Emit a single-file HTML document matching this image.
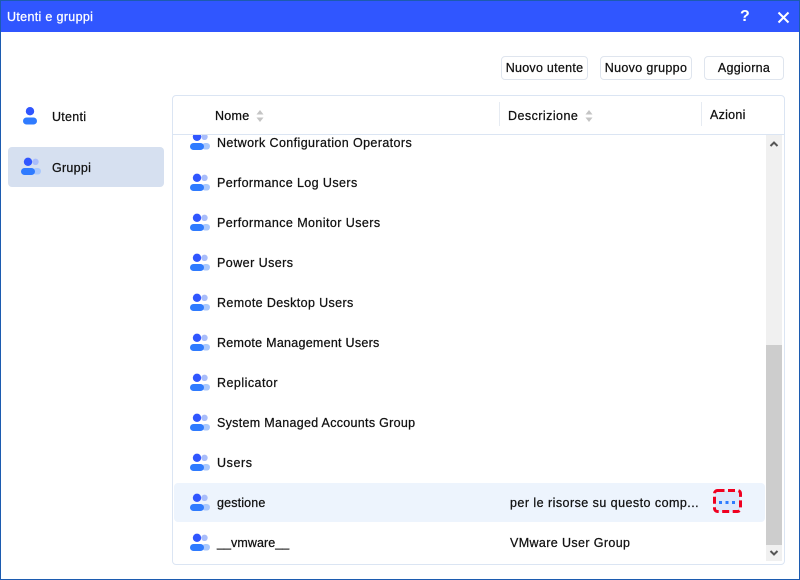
<!DOCTYPE html>
<html><head><meta charset="utf-8"><style>
html,body{margin:0;padding:0;background:#fff}
#w{position:relative;width:800px;height:580px;overflow:hidden;background:#fff;font-family:"Liberation Sans",sans-serif;font-size:12.5px;color:#111;letter-spacing:.27px;-webkit-text-stroke:.25px currentColor}
#w div{position:absolute;box-sizing:border-box;white-space:nowrap}
.t{line-height:16px}
.btn{top:56px;height:24px;border:1px solid #dfe5ee;border-radius:4px;text-align:center;line-height:23px;background:#fff;-webkit-text-stroke:.25px #111}
svg{position:absolute;left:0;top:0;overflow:visible}
</style></head><body><div id="w">
<svg width="0" height="0" style="position:absolute"><defs><g id="g"><circle cx="14.500" cy="3.800" r="3.200" fill="#a9bdfb"/><rect x="12" y="10" width="8" height="6.500" rx="3.200" fill="#a9c8fd"/><circle cx="7" cy="3.800" r="4.200" fill="#3056ff"/><rect x="0" y="10" width="14" height="7" rx="3.500" fill="#2f7bff"/></g></defs></svg>
<div style="left:0;top:0;width:800px;height:580px;border:1px solid #1c5bb0;border-top:none"></div>
<div style="left:0;top:0;width:800px;height:32px;background:#3056ff;border:1px solid #1c5bb0;border-width:1px 1px 0 1px"></div>
<div class="t" style="left:7px;top:9px;color:#fff;letter-spacing:.33px">Utenti e gruppi</div>
<div style="left:740px;top:7px;color:#fff;font-size:16px;font-weight:bold;line-height:20px;letter-spacing:0;-webkit-text-stroke:0">?</div>
<svg style="left:777px;top:11px" width="13" height="13"><path d="M1.500 1.500L11.500 11.500M11.500 1.500L1.500 11.500" stroke="#fff" stroke-width="2" fill="none"/></svg>

<div class="btn" style="left:501px;width:87px">Nuovo utente</div>
<div class="btn" style="left:600px;width:92px;letter-spacing:.33px">Nuovo gruppo</div>
<div class="btn" style="left:704px;width:80px">Aggiorna</div>

<div style="left:8px;top:147px;width:156px;height:40px;background:#d6e0f0;border-radius:4px"></div>
<svg style="left:23px;top:107px" width="15" height="18"><circle cx="7" cy="4.200" r="4.200" fill="#3056ff"/><rect x="0" y="10.500" width="14" height="7" rx="3.500" fill="#2f7bff"/></svg>
<div class="t" style="left:52px;top:109px">Utenti</div>
<svg style="left:21px;top:158px" width="20" height="18"><use href="#g"/></svg>
<div class="t" style="left:52px;top:160px">Gruppi</div>

<div style="left:172px;top:95px;width:613px;height:470px;border:1px solid #dbe5f3;border-radius:4px"></div>
<div style="left:173px;top:134px;width:611px;height:1px;background:#dbe5f3"></div>
<div class="t" style="left:215px;top:108px">Nome</div>
<svg style="left:256px;top:110px" width="8" height="12"><path d="M4 0L7.500 4.500H.5Z" fill="#c4c4c4"/><path d="M4 12L7.500 7.500H.5Z" fill="#c4c4c4"/></svg>
<div style="left:499px;top:102px;width:1px;height:24px;background:#e6ebf2"></div>
<div class="t" style="left:508px;top:108px;letter-spacing:.45px">Descrizione</div>
<svg style="left:585px;top:110px" width="8" height="12"><path d="M4 0L7.500 4.500H.5Z" fill="#c4c4c4"/><path d="M4 12L7.500 7.500H.5Z" fill="#c4c4c4"/></svg>
<div style="left:701px;top:102px;width:1px;height:24px;background:#e6ebf2"></div>
<div class="t" style="left:710px;top:107px">Azioni</div>

<div style="left:174px;top:483px;width:591px;height:39px;background:#edf4fd;border-radius:4px"></div>

<div style="left:173px;top:135px;width:593px;height:429px;overflow:hidden">
<svg style="left:17px;top:-2px" width="20" height="18"><use href="#g"/></svg>
</div>
<div class="t" style="left:217px;top:135px;letter-spacing:.4px">Network Configuration Operators</div>

<svg style="left:190px;top:174px" width="20" height="18"><use href="#g"/></svg>
<div class="t" style="left:217px;top:175px;letter-spacing:.41px">Performance Log Users</div>
<svg style="left:190px;top:214px" width="20" height="18"><use href="#g"/></svg>
<div class="t" style="left:217px;top:215px;letter-spacing:.43px">Performance Monitor Users</div>
<svg style="left:190px;top:254px" width="20" height="18"><use href="#g"/></svg>
<div class="t" style="left:217px;top:255px;letter-spacing:.45px">Power Users</div>
<svg style="left:190px;top:294px" width="20" height="18"><use href="#g"/></svg>
<div class="t" style="left:217px;top:295px;letter-spacing:.37px">Remote Desktop Users</div>
<svg style="left:190px;top:334px" width="20" height="18"><use href="#g"/></svg>
<div class="t" style="left:217px;top:335px">Remote Management Users</div>
<svg style="left:190px;top:374px" width="20" height="18"><use href="#g"/></svg>
<div class="t" style="left:217px;top:375px;letter-spacing:.47px">Replicator</div>
<svg style="left:190px;top:414px" width="20" height="18"><use href="#g"/></svg>
<div class="t" style="left:217px;top:415px;letter-spacing:.3px">System Managed Accounts Group</div>
<svg style="left:190px;top:454px" width="20" height="18"><use href="#g"/></svg>
<div class="t" style="left:217px;top:455px;letter-spacing:.6px">Users</div>
<svg style="left:190px;top:494px" width="20" height="18"><use href="#g"/></svg>
<div class="t" style="left:217px;top:495px;letter-spacing:.15px">gestione</div>
<div class="t" style="left:510px;top:495px;letter-spacing:.46px">per le risorse su questo comp...</div>
<svg style="left:190px;top:534px" width="20" height="18"><use href="#g"/></svg>
<div class="t" style="left:217px;top:535px;letter-spacing:.07px">__vmware__</div>
<div class="t" style="left:510px;top:535px;letter-spacing:.38px">VMware User Group</div>

<svg style="left:713px;top:489px" width="29" height="25"><rect x="2" y="2" width="25" height="21" rx="2" fill="#dde8fb"/><rect x="1.500" y="1.500" width="26" height="21" rx="3" fill="none" stroke="#f00020" stroke-width="3" stroke-dasharray="7 3.500"/><rect x="6" y="12" width="3" height="3" fill="#2f7bff"/><rect x="12.500" y="12" width="3" height="3" fill="#2f7bff"/><rect x="19" y="12" width="3" height="3" fill="#2f7bff"/></svg>

<div style="left:766px;top:135px;width:16px;height:426px;background:#f0f0f0"></div>
<div style="left:766px;top:345px;width:16px;height:200px;background:#cdcdcd"></div>
<svg style="left:769px;top:140px" width="10" height="8"><path d="M1.500 6L5 2.500L8.500 6" stroke="#555" stroke-width="2" fill="none"/></svg>
<svg style="left:769px;top:549px" width="10" height="8"><path d="M1.500 2L5 5.500L8.500 2" stroke="#555" stroke-width="2" fill="none"/></svg>
</div></body></html>
